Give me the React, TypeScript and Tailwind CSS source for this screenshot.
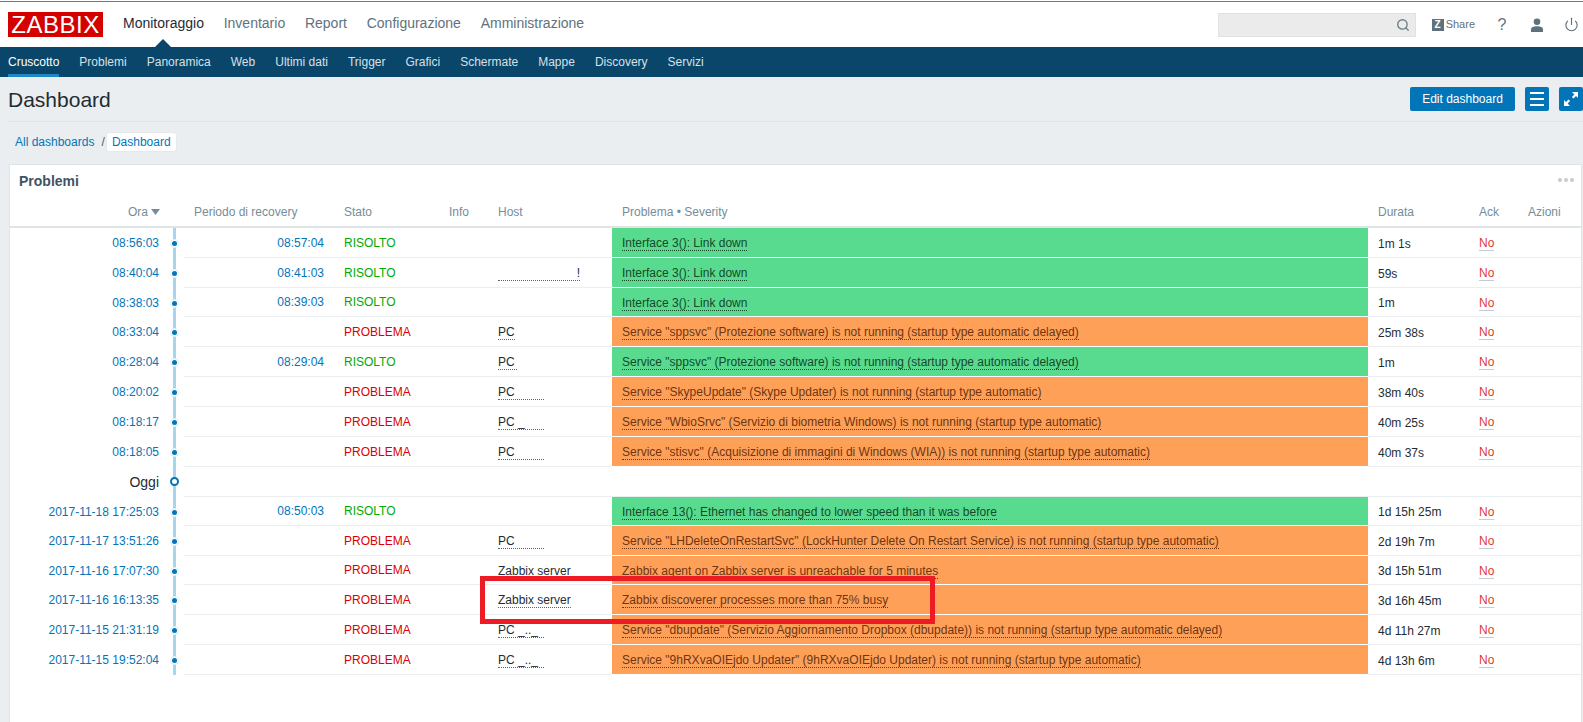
import React from "react";
import { Search, Power } from "lucide-react";

type Row = {
  time: string;
  rec?: string;
  ok: boolean;
  host?: string;
  hostW?: string;
  hostLine?: boolean;
  problem: string;
  dur: string;
  h: string;
};

const rows: Row[] = [
  { time: "08:56:03", rec: "08:57:04", ok: true, problem: "Interface 3(): Link down", dur: "1m 1s", h: "h-[30px]" },
  { time: "08:40:04", rec: "08:41:03", ok: true, host: "!", hostW: "w-[82px] text-right", problem: "Interface 3(): Link down", dur: "59s", h: "h-[30px]" },
  { time: "08:38:03", rec: "08:39:03", ok: true, problem: "Interface 3(): Link down", dur: "1m", h: "h-[29px]" },
  { time: "08:33:04", ok: false, host: "PC", hostW: "w-[17px]", problem: 'Service "sppsvc" (Protezione software) is not running (startup type automatic delayed)', dur: "25m 38s", h: "h-[30px]" },
  { time: "08:28:04", rec: "08:29:04", ok: true, host: "PC", hostW: "w-[19px]", problem: 'Service "sppsvc" (Protezione software) is not running (startup type automatic delayed)', dur: "1m", h: "h-[30px]" },
  { time: "08:20:02", ok: false, host: "PC", hostW: "w-[46px]", problem: 'Service "SkypeUpdate" (Skype Updater) is not running (startup type automatic)', dur: "38m 40s", h: "h-[30px]" },
  { time: "08:18:17", ok: false, host: "PC _", hostW: "w-[46px]", problem: 'Service "WbioSrvc" (Servizio di biometria Windows) is not running (startup type automatic)', dur: "40m 25s", h: "h-[30px]" },
  { time: "08:18:05", ok: false, host: "PC", hostW: "w-[46px]", problem: 'Service "stisvc" (Acquisizione di immagini di Windows (WIA)) is not running (startup type automatic)', dur: "40m 37s", h: "h-[30px]" },
];

const rows2: Row[] = [
  { time: "2017-11-18 17:25:03", rec: "08:50:03", ok: true, problem: "Interface 13(): Ethernet has changed to lower speed than it was before", dur: "1d 15h 25m", h: "h-[29px]" },
  { time: "2017-11-17 13:51:26", ok: false, host: "PC", hostW: "w-[46px]", problem: 'Service "LHDeleteOnRestartSvc" (LockHunter Delete On Restart Service) is not running (startup type automatic)', dur: "2d 19h 7m", h: "h-[30px]" },
  { time: "2017-11-16 17:07:30", ok: false, host: "Zabbix server", hostLine: false, problem: "Zabbix agent on Zabbix server is unreachable for 5 minutes", dur: "3d 15h 51m", h: "h-[29px]" },
  { time: "2017-11-16 16:13:35", ok: false, host: "Zabbix server", problem: "Zabbix discoverer processes more than 75% busy", dur: "3d 16h 45m", h: "h-[30px]" },
  { time: "2017-11-15 21:31:19", ok: false, host: "PC _.._", hostW: "w-[46px]", problem: 'Service "dbupdate" (Servizio Aggiornamento Dropbox (dbupdate)) is not running (startup type automatic delayed)', dur: "4d 11h 27m", h: "h-[30px]" },
  { time: "2017-11-15 19:52:04", ok: false, host: "PC _.._", hostW: "w-[46px]", problem: 'Service "9hRXvaOIEjdo Updater" (9hRXvaOIEjdo Updater) is not running (startup type automatic)', dur: "4d 13h 6m", h: "h-[30px]" },
];

function ProblemRow({ r }: { r: Row }) {
  return (
    <div className={`flex ${r.h}`}>
      <div className="w-[149px] flex items-center justify-end text-[#0275b8]">{r.time}</div>
      <div className="relative w-[25px] shrink-0">
        <div className="absolute left-[14px] top-0 bottom-0 w-[3px] bg-[#a8d5ee]" />
        <div className="absolute left-[11px] top-1/2 -mt-[4px] w-[9px] h-[9px] rounded-full bg-white border border-[#e4eef5] flex items-center justify-center">
          <div className="w-[5px] h-[5px] rounded-full bg-[#0275b8]" />
        </div>
      </div>
      <div className="flex flex-1 border-b border-[#ebeef0]">
        <div className="w-[140px] flex items-center justify-end text-[#0275b8]">{r.rec}</div>
        <div className={`w-[125px] pl-[20px] flex items-center ${r.ok ? "text-[#00aa00]" : "text-[#dc0000]"}`}>
          {r.ok ? "RISOLTO" : "PROBLEMA"}
        </div>
        <div className="w-[49px]" />
        <div className="w-[114px] pt-[2px] flex items-center text-[#1f2c33]">
          {r.host && (
            <span className={`${r.hostW ?? ""} whitespace-nowrap overflow-hidden leading-[14px] ${r.hostLine === false ? "" : "border-b border-dotted border-[#59656c]"}`}>
              {r.host}
            </span>
          )}
        </div>
        <div className={`w-[756px] pl-[10px] pt-[2px] flex items-center -mb-px border-b border-white ${r.ok ? "bg-[#59db8f] text-[#134a2a]" : "bg-[#ffa059] text-[#6e3510]"}`}>
          <span className={`leading-[14px] border-b border-dotted ${r.ok ? "border-[#134a2a]" : "border-[#6e3510]"}`}>{r.problem}</span>
        </div>
        <div className="w-[111px] pl-[10px] pt-[2px] flex items-center text-[#1f2c33]">{r.dur}</div>
        <div className="w-[49px] pt-[2px] flex items-center text-[#e33734]">
          <span className="leading-[14px] border-b border-[#c5ccd1]">No</span>
        </div>
      </div>
    </div>
  );
}

export default function App() {
  return (
    <div className="relative w-[1583px] h-[722px] overflow-hidden flex flex-col bg-[#ebeef0] text-[12px] font-['Liberation_Sans',Arial,sans-serif]">
      <div className="h-px bg-white" />
      <div className="h-px bg-[#777777]" />
      <header className="relative h-[45px] bg-white flex items-center pl-[8px]">
        <div className="w-[95px] h-[25px] -mt-[1px] bg-[#d40000] text-white text-[24px] leading-[25px] tracking-[0.5px] text-center">ZABBIX</div>
        <nav className="flex gap-[19.75px] ml-[20px] text-[14px] -mt-[3px] text-[#5f727c]">
          <span className="text-[#1f2c33]">Monitoraggio</span>
          <span>Inventario</span>
          <span>Report</span>
          <span>Configurazione</span>
          <span>Amministrazione</span>
        </nav>
        <div className="absolute left-[155px] bottom-0 w-0 h-0 border-l-[8px] border-r-[8px] border-b-[8px] border-l-transparent border-r-transparent border-b-[#0a466a]" />
        <div className="ml-auto flex items-center text-[#5f727c]">
          <div className="w-[198px] h-[24px] bg-[#ebebeb] border border-[#e0e3e5] flex items-center justify-end pr-[5px]">
            <Search size={14} strokeWidth={2.4} className="text-[#6f818b]" />
          </div>
          <div className="ml-[16px] w-[12px] h-[12px] bg-[#5f727c] text-white text-[10px] leading-[12px] font-bold text-center">Z</div>
          <span className="ml-[2px] text-[11px]">Share</span>
          <span className="ml-[15px] w-[24px] text-center text-[16px] leading-[20px]">?</span>
          <span className="ml-[11px] w-[24px] flex justify-center">
            <svg width="14" height="14" viewBox="0 0 14 14" fill="#5f727c">
              <circle cx="7" cy="3.8" r="3.3" />
              <path d="M1 14 v-2.6 c0-2 2.4-3.2 6-3.2 s6 1.2 6 3.2 V14 z" />
            </svg>
          </span>
          <span className="ml-[10px] w-[24px] flex justify-center">
            <Power size={15} strokeWidth={1.8} className="text-[#5f727c]" />
          </span>
        </div>
      </header>
      <nav className="h-[30px] bg-[#0a466a] flex gap-[20px] pl-[8px] text-[#d5e0e6]">
        <span className="h-full flex items-center border-b-[3px] border-[#1d8ac7] pt-[2px] text-white">Cruscotto</span>
        {["Problemi", "Panoramica", "Web", "Ultimi dati", "Trigger", "Grafici", "Schermate", "Mappe", "Discovery", "Servizi"].map((t) => (
          <span key={t} className="h-full flex items-center pb-[1px]">{t}</span>
        ))}
      </nav>
      <div className="h-[45px] ml-[8px] border-b border-[#dfe4e7] flex items-center">
        <h1 className="text-[21px] text-[#1f2c33] leading-[24px] mt-[2px]">Dashboard</h1>
        <div className="ml-auto flex">
          <div className="w-[105px] h-[24px] bg-[#0275b8] rounded-[2px] text-white flex items-center justify-center">Edit dashboard</div>
          <div className="ml-[10px] w-[24px] h-[24px] bg-[#0275b8] rounded-[2px] flex flex-col items-center justify-center gap-[4px]">
            <div className="w-[14px] h-[2px] bg-white" />
            <div className="w-[14px] h-[2px] bg-white" />
            <div className="w-[14px] h-[2px] bg-white" />
          </div>
          <div className="ml-[10px] w-[24px] h-[24px] bg-[#0275b8] rounded-[2px] flex items-center justify-center">
            <svg width="16" height="16" viewBox="0 0 16 16" fill="white">
              <path d="M9 1 h6 v6 l-2-2 -2.5 2.5 -1.6-1.6 L11.4 3.4 z" />
              <path d="M1 15 v-6 l2 2 2.5-2.5 1.6 1.6 L4.6 12.6 7 15 z" />
            </svg>
          </div>
        </div>
      </div>
      <div className="h-[42px] pt-[10px] pl-[15px] flex items-start text-[#0275b8]">
        <span className="h-[20px] flex items-center">All dashboards</span>
        <span className="h-[20px] flex items-center ml-[7px] text-[#4b5a63]">/</span>
        <span className="h-[20px] ml-[1px] w-[71px] flex items-center justify-center bg-white rounded-[3px] border border-[#e6e9eb]">Dashboard</span>
      </div>
      <section className="flex-1 ml-[9px] mr-[1px] bg-white border border-[#dfe4e7] border-b-0">
        <div className="relative h-[32px] pl-[9px] flex items-center text-[14px] font-bold text-[#3f5360]">
          Problemi
          <div className="absolute right-[7px] top-[13px] flex gap-[2px]">
            <div className="w-[4px] h-[4px] rounded-full bg-[#c5ccd1]" />
            <div className="w-[4px] h-[4px] rounded-full bg-[#c5ccd1]" />
            <div className="w-[4px] h-[4px] rounded-full bg-[#c5ccd1]" />
          </div>
        </div>
        <div className="h-[31px] flex items-center border-b-2 border-[#dfe4e7] text-[#768d99]">
          <div className="w-[150px] flex items-center justify-end">
            Ora
            <svg width="9" height="6" viewBox="0 0 9 6" className="ml-[3px]" fill="#768d99"><path d="M0 0 h9 L4.5 6 z" /></svg>
          </div>
          <div className="w-[24px]" />
          <div className="w-[140px] pl-[10px]">Periodo di recovery</div>
          <div className="w-[125px] pl-[20px]">Stato</div>
          <div className="w-[49px]">Info</div>
          <div className="w-[114px]">Host</div>
          <div className="w-[756px] pl-[10px]">Problema • Severity</div>
          <div className="w-[111px] pl-[10px]">Durata</div>
          <div className="w-[49px]">Ack</div>
          <div>Azioni</div>
        </div>
        {rows.map((r, i) => <ProblemRow key={i} r={r} />)}
        <div className="flex h-[30px]">
          <div className="w-[149px] flex items-center justify-end text-[14px] text-[#1f2c33]">Oggi</div>
          <div className="relative w-[25px] shrink-0">
            <div className="absolute left-[14px] top-0 bottom-0 w-[3px] bg-[#a8d5ee]" />
            <div className="absolute left-[11px] top-1/2 -mt-[5px] w-[9px] h-[9px] rounded-full bg-white border-2 border-[#0275b8]" />
          </div>
          <div className="flex-1 border-b border-[#ebeef0]" />
        </div>
        {rows2.map((r, i) => <ProblemRow key={i} r={r} />)}
      </section>
      <div className="absolute left-[480px] top-[576px] w-[455px] h-[48px] border-[5px] border-[#ed1c24]" />
    </div>
  );
}
